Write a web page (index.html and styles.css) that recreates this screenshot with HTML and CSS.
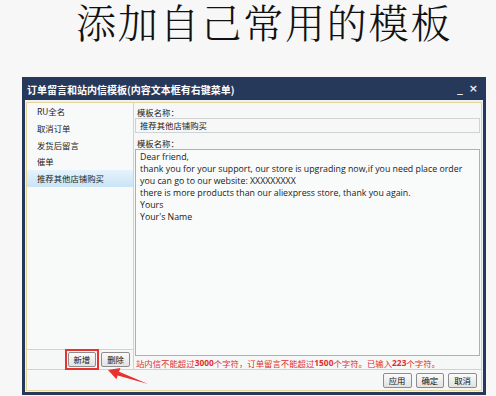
FILE: index.html
```html
<!DOCTYPE html>
<html lang="zh-CN">
<head>
<meta charset="utf-8">
<title>添加自己常用的模板</title>
<link rel="stylesheet" href="styles.css">
</head>
<body>
<h1 class="headline">添加自己常用的模板</h1>
<div class="dialog">
  <div class="titlebar">
    <span class="title">订单留言和站内信模板(内容文本框有右键菜单)</span>
    <span class="win-ctrls"><span class="min">_</span><span class="close">×</span></span>
  </div>
  <div class="dialog-body">
    <div class="frame">
      <div class="main">
        <div class="left">
          <ul class="list">
            <li>RU全名</li>
            <li>取消订单</li>
            <li>发货后留言</li>
            <li>催单</li>
            <li class="selected">推荐其他店铺购买</li>
          </ul>
          <div class="left-actions">
            <span class="highlight"><button class="btn">新增</button></span>
            <button class="btn">删除</button>
          </div>
        </div>
        <div class="right">
          <div class="label">模板名称：</div>
          <div class="input">推荐其他店铺购买</div>
          <div class="label label2">模板名称：</div>
          <div class="textarea">Dear friend,<br>thank you for your support, our store is upgrading now,if you need place order<br>you can go to our website: XXXXXXXXX<br>there is more products than our aliexpress store, thank you again.<br>Yours<br>Your's Name</div>
          <div class="notice">站内信不能超过<b>3000</b>个字符，订单留言不能超过<b>1500</b>个字符。已输入<b>223</b>个字符。</div>
        </div>
      </div>
      <div class="footer">
        <button class="btn">应用</button>
        <button class="btn">确定</button>
        <button class="btn">取消</button>
      </div>
    </div>
  </div>
</div>
<svg class="arrow" width="48" height="28" viewBox="0 0 48 28">
  <polygon points="4,10 16.4,8 15.1,11.7 44,24 13.7,15.5 12.4,19.3" fill="#e8322f"/>
</svg>
</body>
</html>
```
FILE: styles.css
```css
html, body {
  margin: 0;
  padding: 0;
}
body {
  background: #f7f7f7;
  width: 496px;
  height: 396px;
  position: relative;
  font-family: "Noto Sans CJK SC", "Noto Sans", sans-serif;
}
.headline {
  margin: 0;
  height: 77px;
  line-height: 42px;
  padding-left: 76px;
  font-family: "Noto Serif CJK SC", "Noto Sans CJK SC", serif;
  font-weight: 300;
  font-size: 40px;
  letter-spacing: 1.8px;
  color: #111;
  white-space: nowrap;
}
.dialog {
  margin-left: 22px;
  width: 464px;
  box-sizing: border-box;
  background: #26395b;
  padding: 0 3px 3px;
}
.titlebar {
  height: 23px;
  display: flex;
  align-items: center;
  justify-content: space-between;
  color: #fff;
}
.title {
  font-size: 10px;
  font-weight: 700;
  padding-left: 2px;
  padding-top: 1px;
}
.win-ctrls {
  display: flex;
  gap: 6px;
  font-family: "DejaVu Sans", sans-serif;
  font-size: 11px;
  font-weight: 700;
  padding-right: 5px;
  color: #e8ecf2;
}
.dialog-body {
  background: #eef1f3;
  padding: 2px 1px 1px;
}
.frame {
  border: 1px solid #e3d49a;
  background: #f6f8f8;
}
.main {
  display: flex;
  border-bottom: 1px solid #e3d49a;
}
.left {
  width: 106px;
  border-right: 1px solid #e3d49a;
  display: flex;
  flex-direction: column;
}
.list {
  list-style: none;
  margin: 0;
  padding: 0;
  height: 246px;
  border-bottom: 1px solid #e3d49a;
  background: #f8fafa;
}
.list li {
  height: 16.75px;
  line-height: 16.75px;
  padding-left: 10px;
  font-size: 8.4px;
  color: #222;
}
.list li.selected {
  background: linear-gradient(#e4f3fc, #c9e4f5);
}
.left-actions {
  height: 19px;
  display: flex;
  align-items: center;
  justify-content: flex-end;
  gap: 2px;
  padding-right: 3px;
}
.highlight {
  display: flex;
  border: 2px solid #e8322f;
  padding: 1px;
}
.btn {
  font-family: "Noto Sans CJK SC", sans-serif;
  font-size: 8.4px;
  color: #111;
  height: 15px;
  padding: 0 5px;
  border: 1px solid #8d8d8d;
  border-radius: 2px;
  background: linear-gradient(#fbfbfb, #e2e2e2);
  line-height: 13px;
  margin: 0;
}
.right {
  flex: 1;
  padding: 3px 1px 0 1px;
  display: flex;
  flex-direction: column;
}
.label {
  font-size: 8.4px;
  line-height: 12px;
  color: #222;
  padding-left: 2px;
}
.label2 {
  margin-top: 4px;
}
.input {
  height: 13px;
  border: 1px solid #cfd3d3;
  background: #f7f7f7;
  font-size: 8.4px;
  line-height: 13px;
  padding-left: 4px;
  color: #222;
}
.textarea {
  height: 203px;
  border: 1px solid #98b7cc;
  background: #f9fafa;
  padding: 1px 4px;
  font-family: "Open Sans", "Noto Sans", sans-serif;
  font-size: 8.8px;
  line-height: 12px;
  color: #1a1a1a;
}
.notice {
  flex: 1;
  display: flex;
  align-items: center;
  font-size: 8.4px;
  color: #e0302c;
  padding-left: 1px;
}
.notice b {
  font-family: "Open Sans", sans-serif;
  font-weight: 700;
}
.footer {
  height: 20px;
  display: flex;
  align-items: center;
  justify-content: flex-end;
  gap: 4px;
  padding-right: 4px;
}
.arrow {
  position: absolute;
  left: 104px;
  top: 360px;
}
```
